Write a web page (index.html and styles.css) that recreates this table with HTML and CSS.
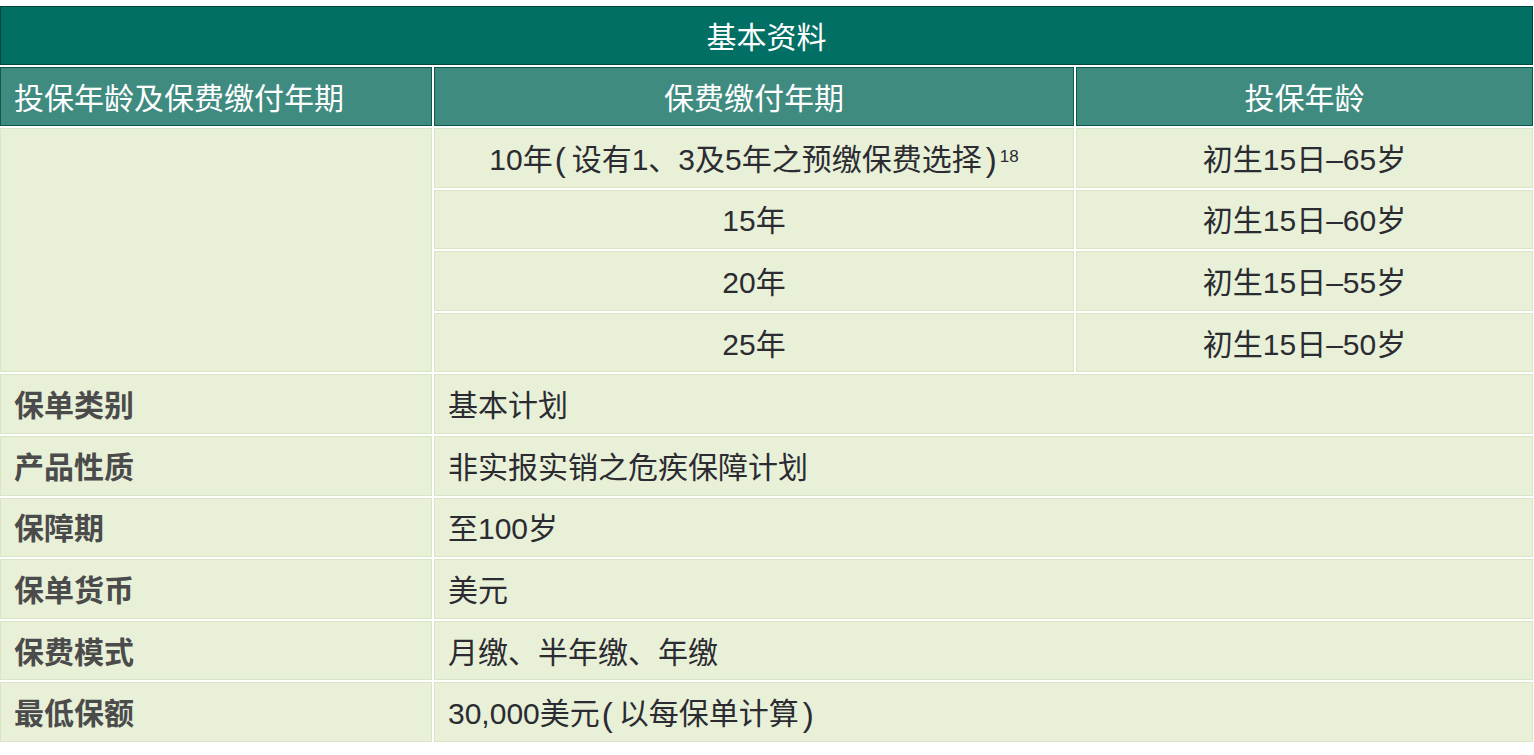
FILE: index.html
```html
<!DOCTYPE html>
<html lang="zh-CN">
<head>
<meta charset="utf-8">
<title>基本资料</title>
<link rel="stylesheet" href="styles.css">
</head>
<body>
<div class="sheet">
  <div class="cell title">基本资料</div>

  <div class="cell head head-left">投保年龄及保费缴付年期</div>
  <div class="cell head center">保费缴付年期</div>
  <div class="cell head center">投保年龄</div>

  <div class="cell body span4"></div>
  <div class="cell body center">10年<span class="lp">(</span>设有1、3及5年之预缴保费选择<span class="rp">)</span><sup class="note">18</sup></div>
  <div class="cell body center">初生15日–65岁</div>
  <div class="cell body center">15年</div>
  <div class="cell body center">初生15日–60岁</div>
  <div class="cell body center">20年</div>
  <div class="cell body center">初生15日–55岁</div>
  <div class="cell body center">25年</div>
  <div class="cell body center">初生15日–50岁</div>

  <div class="cell body label">保单类别</div>
  <div class="cell body value wide">基本计划</div>
  <div class="cell body label">产品性质</div>
  <div class="cell body value wide">非实报实销之危疾保障计划</div>
  <div class="cell body label">保障期</div>
  <div class="cell body value wide">至100岁</div>
  <div class="cell body label">保单货币</div>
  <div class="cell body value wide">美元</div>
  <div class="cell body label">保费模式</div>
  <div class="cell body value wide">月缴、半年缴、年缴</div>
  <div class="cell body label">最低保额</div>
  <div class="cell body value wide">30,000美元<span class="lp">(</span>以每保单计算<span class="rp">)</span></div>
</div>
</body>
</html>
```

FILE: styles.css
```css
html, body {
  margin: 0;
  padding: 0;
  background: #ffffff;
}

body {
  font-family: "Liberation Sans", "Noto Sans CJK SC", sans-serif;
}

.sheet {
  display: grid;
  grid-template-columns: 432px 640px 457px;
  grid-template-rows: 59px 59px repeat(10, 59.6px);
  gap: 2px;
  width: 1533px;
  margin-top: 6px;
  background: #ffffff;
}

.cell {
  box-sizing: border-box;
  display: flex;
  align-items: center;
  border: 1px solid transparent;
  font-size: 30px;
  line-height: 1;
  white-space: nowrap;
  padding-top: 4px;
}

.title {
  grid-column: 1 / -1;
  justify-content: center;
  background: #016f64;
  border-color: #00463d;
  color: #ffffff;
  padding-top: 5px;
}

.head {
  background: #3f8b80;
  border-color: #0b5a50;
  color: #ffffff;
}

.head-left {
  padding-left: 13px;
}

.center {
  justify-content: center;
}

.body {
  background: #e8f0d8;
  border-color: #d9e6c6;
  color: #2b2b31;
}

.span4 {
  grid-row: span 4;
}

.wide {
  grid-column: 2 / 4;
}

.label {
  padding-left: 13px;
  font-weight: bold;
  color: #4b4b4b;
}

.value {
  padding-left: 13px;
}

.lp,
.rp {
  font-size: 33px;
  font-weight: 300;
}

.lp {
  margin-left: 2px;
  margin-right: 6px;
}

.rp {
  margin-left: 4px;
}

.note {
  font-size: 17px;
  align-self: flex-start;
  margin-top: 15px;
  margin-left: 3px;
  vertical-align: baseline;
}
```
